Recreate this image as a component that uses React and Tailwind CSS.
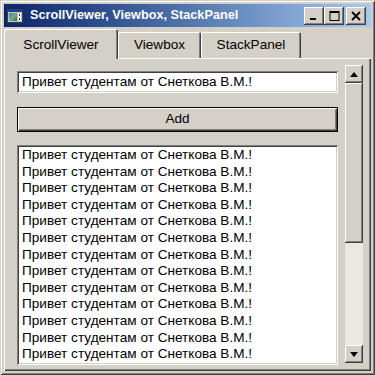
import React from "react";

const line = "Привет студентам от Снеткова В.М.!";

function TitleBtn({ children, className = "" }) {
  return (
    <div
      className={
        "w-[20px] h-[18px] bg-[#d4d0c8] flex items-center justify-center shadow-[inset_-1px_-1px_0_#404040,inset_1px_1px_0_#ffffff,inset_-2px_-2px_0_#808080] " +
        className
      }
    >
      {children}
    </div>
  );
}

function AppIcon() {
  return (
    <svg width="16" height="14" viewBox="0 0 16 14" className="ml-[3px]">
      <rect x="0.5" y="0.5" width="15" height="13" fill="#c0c0c0" stroke="#404040" />
      <rect x="1" y="1" width="14" height="2" fill="#1c3c8c" />
      <defs>
        <linearGradient id="g1" x1="0" y1="0" x2="1" y2="1">
          <stop offset="0" stopColor="#3a7fb0" />
          <stop offset="0.5" stopColor="#6fb08a" />
          <stop offset="1" stopColor="#2f6f4f" />
        </linearGradient>
      </defs>
      <rect x="2" y="4" width="8" height="8" fill="url(#g1)" />
      <rect x="11" y="4" width="3" height="8" fill="#ffffff" />
      <rect x="12" y="5" width="1" height="2" fill="#202020" />
      <rect x="12" y="9" width="1" height="2" fill="#202020" />
    </svg>
  );
}

export default function App() {
  return (
    <div className="w-[375px] h-[375px] overflow-hidden bg-[#d4d0c8] p-[4px] flex flex-col font-['Liberation_Sans',Arial,sans-serif] text-black shadow-[inset_1px_1px_0_#d4d0c8,inset_-1px_-1px_0_#404040,inset_2px_2px_0_#ffffff,inset_-2px_-2px_0_#808080]">
      {/* Title bar */}
      <div className="h-[23px] shrink-0 flex items-center bg-linear-to-r from-[#0a246a] to-[#a6caf0] pr-[5px]">
        <AppIcon />
        <span className="ml-[7px] text-white font-bold text-[12.7px] leading-none">
          ScrollViewer, Viewbox, StackPanel
        </span>
        <div className="ml-auto flex items-center">
          <TitleBtn>
            <svg width="10" height="10" viewBox="0 0 10 10">
              <rect x="1" y="7" width="6" height="2" fill="#000" />
            </svg>
          </TitleBtn>
          <TitleBtn>
            <svg width="11" height="10" viewBox="0 0 11 10">
              <rect x="1" y="0.5" width="9" height="9" fill="none" stroke="#000" />
              <rect x="1" y="0" width="9" height="2" fill="#000" />
            </svg>
          </TitleBtn>
          <TitleBtn className="ml-[2px]">
            <svg width="10" height="10" viewBox="0 0 10 10">
              <path d="M1 1 L9 9 M9 1 L1 9" stroke="#000" strokeWidth="1.8" />
            </svg>
          </TitleBtn>
        </div>
      </div>

      {/* Tabs */}
      <div className="mt-[2px] h-[30px] shrink-0 -mb-[1px] relative z-10 flex items-end text-[13.6px]">
        <div className="w-[114px] h-[30px] bg-[#d4d0c8] rounded-t-[2px] flex items-center justify-center pt-[2px] shadow-[inset_1px_1px_0_#ffffff,inset_-1px_0_0_#404040,inset_-2px_0_0_#808080]">
          ScrollViewer
        </div>
        <div className="w-[83px] h-[26px] mb-[1px] bg-[#d4d0c8] rounded-t-[2px] flex items-center justify-center shadow-[inset_1px_1px_0_#ffffff,inset_-1px_0_0_#404040,inset_-2px_0_0_#808080]">
          Viewbox
        </div>
        <div className="w-[100px] h-[26px] mb-[1px] bg-[#d4d0c8] rounded-t-[2px] flex items-center justify-center shadow-[inset_1px_1px_0_#ffffff,inset_-1px_0_0_#404040,inset_-2px_0_0_#808080]">
          StackPanel
        </div>
      </div>

      {/* Tab panel */}
      <div className="flex-1 min-h-0 overflow-hidden bg-[#d4d0c8] pl-[13px] pr-[8px] pt-[7px] flex items-start gap-[7px] shadow-[inset_1px_1px_0_#ffffff,inset_-1px_-1px_0_#404040,inset_-2px_-2px_0_#808080]">
        {/* content column */}
        <div className="w-[321px] pt-[6px] flex flex-col text-[13.6px]">
          <div className="h-[22px] bg-white flex items-center pl-[5px] shadow-[inset_1px_1px_0_#808080,inset_-1px_-1px_0_#ffffff,inset_2px_2px_0_#404040,inset_-2px_-2px_0_#d4d0c8]">
            {line}
          </div>
          <div className="mt-[14px] h-[25px] border border-black bg-[#d4d0c8] flex items-center justify-center shadow-[inset_1px_1px_0_#ffffff,inset_-1px_-1px_0_#404040,inset_-2px_-2px_0_#808080]">
            Add
          </div>
          <div className="mt-[13px] h-[220px] overflow-hidden bg-white pl-[5px] pt-[2px] shadow-[inset_1px_1px_0_#808080,inset_-1px_-1px_0_#ffffff,inset_2px_2px_0_#404040,inset_-2px_-2px_0_#d4d0c8]">
            {Array.from({ length: 13 }).map((_, i) => (
              <div key={i} className="leading-[16.6px] whitespace-nowrap">
                {line}
              </div>
            ))}
          </div>
        </div>

        {/* scrollbar */}
        <div className="w-[18px] h-[298px] shrink-0 flex flex-col bg-[#eae8e3]">
          <div className="h-[18px] shrink-0 bg-[#d4d0c8] flex items-center justify-center shadow-[inset_-1px_-1px_0_#404040,inset_1px_1px_0_#ffffff,inset_-2px_-2px_0_#808080]">
            <svg width="8" height="5" viewBox="0 0 8 5">
              <path d="M4 0 L8 5 L0 5 Z" fill="#000" />
            </svg>
          </div>
          <div className="h-[160px] shrink-0 bg-[#d4d0c8] shadow-[inset_-1px_-1px_0_#404040,inset_1px_1px_0_#ffffff,inset_-2px_-2px_0_#808080]" />
          <div className="flex-1" />
          <div className="h-[18px] shrink-0 bg-[#d4d0c8] flex items-center justify-center shadow-[inset_-1px_-1px_0_#404040,inset_1px_1px_0_#ffffff,inset_-2px_-2px_0_#808080]">
            <svg width="8" height="5" viewBox="0 0 8 5">
              <path d="M0 0 L8 0 L4 5 Z" fill="#000" />
            </svg>
          </div>
        </div>
      </div>
    </div>
  );
}
